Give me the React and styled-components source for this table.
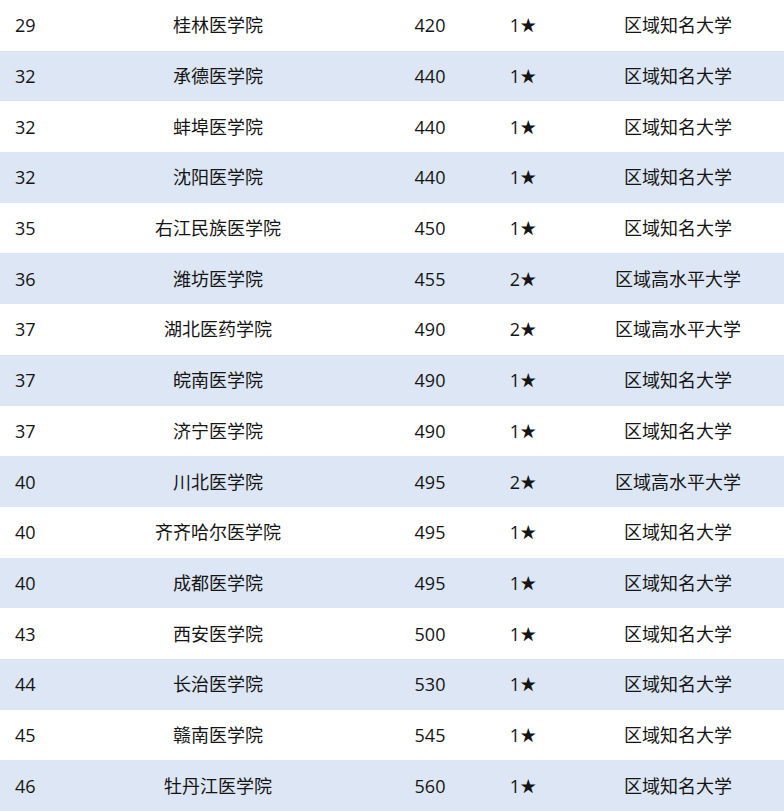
import React from 'react'
import styled, { createGlobalStyle } from 'styled-components'

const rows = [
    ['29', '桂林医学院', '420', 1, '区域知名大学'],
    ['32', '承德医学院', '440', 1, '区域知名大学'],
    ['32', '蚌埠医学院', '440', 1, '区域知名大学'],
    ['32', '沈阳医学院', '440', 1, '区域知名大学'],
    ['35', '右江民族医学院', '450', 1, '区域知名大学'],
    ['36', '潍坊医学院', '455', 2, '区域高水平大学'],
    ['37', '湖北医药学院', '490', 2, '区域高水平大学'],
    ['37', '皖南医学院', '490', 1, '区域知名大学'],
    ['37', '济宁医学院', '490', 1, '区域知名大学'],
    ['40', '川北医学院', '495', 2, '区域高水平大学'],
    ['40', '齐齐哈尔医学院', '495', 1, '区域知名大学'],
    ['40', '成都医学院', '495', 1, '区域知名大学'],
    ['43', '西安医学院', '500', 1, '区域知名大学'],
    ['44', '长治医学院', '530', 1, '区域知名大学'],
    ['45', '赣南医学院', '545', 1, '区域知名大学'],
    ['46', '牡丹江医学院', '560', 1, '区域知名大学'],
]

function App() {
    return (
        <>
            <GlobalStyle />
            <Table>
                {rows.map((r, i) => (
                    <Row key={i} striped={i % 2 === 1}>
                        <Cell align="left">{r[0]}</Cell>
                        <Cell>{r[1]}</Cell>
                        <Cell>{r[2]}</Cell>
                        <Cell>{r[3]}<Star>★</Star></Cell>
                        <Cell>{r[4]}</Cell>
                    </Row>
                ))}
            </Table>
        </>
    )
}

export default App

const GlobalStyle = createGlobalStyle`
    body {
        margin: 0;
        background: #ffffff;
        font-family: "Open Sans", "Noto Sans CJK SC", sans-serif;
    }
`;

const Table = styled.div`
    width: 784px;
    height: 811px;
    display: grid;
    grid-template-rows: repeat(16, 1fr);
    overflow: hidden;
`;

const Row = styled.div.withConfig({ shouldForwardProp: (p) => p !== 'striped' })`
    display: grid;
    grid-template-columns: 50px 336px 88px 98px 212px;
    align-items: center;
    background: ${(p) => (p.striped ? '#dce6f4' : '#ffffff')};
`;

const Cell = styled.div`
    font-size: 18px;
    color: #151515;
    text-align: ${(p) => p.align || 'center'};
    padding-left: ${(p) => (p.align === 'left' ? '15px' : '0')};
    white-space: nowrap;
    line-height: 1;
`;

const Star = styled.span`
    font-family: "Noto Sans CJK SC", sans-serif;
    font-size: 16px;
    vertical-align: 1px;
`;
